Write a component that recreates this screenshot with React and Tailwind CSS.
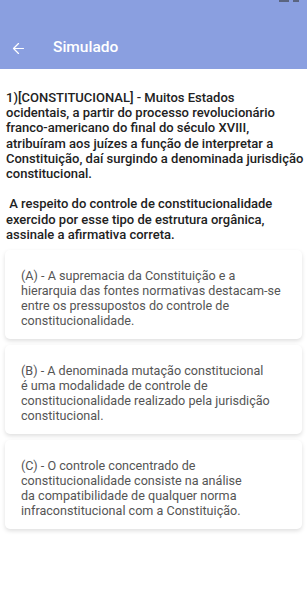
import { ArrowLeft } from "lucide-react";

const question = [
  "1)[CONSTITUCIONAL] - Muitos Estados",
  "ocidentais, a partir do processo revolucionário",
  "franco-americano do final do século XVIII,",
  "atribuíram aos juízes a função de interpretar a",
  "Constituição, daí surgindo a denominada jurisdição",
  "constitucional.",
  "\u00a0",
  "\u00a0A respeito do controle de constitucionalidade",
  "exercido por esse tipo de estrutura orgânica,",
  "assinale a afirmativa correta.",
];

const options = [
  [
    "(A) - A supremacia da Constituição e a",
    "hierarquia das fontes normativas destacam-se",
    "entre os pressupostos do controle de",
    "constitucionalidade.",
  ],
  [
    "(B) - A denominada mutação constitucional",
    "é uma modalidade de controle de",
    "constitucionalidade realizado pela jurisdição",
    "constitucional.",
  ],
  [
    "(C) - O controle concentrado de",
    "constitucionalidade consiste na análise",
    "da compatibilidade de qualquer norma",
    "infraconstitucional com a Constituição.",
  ],
];

function App() {
  return (
    <div className="w-[307px] h-[592px] bg-white overflow-hidden font-['Roboto',sans-serif]">
      <header className="h-[69px] bg-[#8a9fe0] relative flex items-end pb-[12px]">
        <div className="absolute top-0 right-[8px] flex gap-[4px]">
          <div className="w-[10px] h-[2px] bg-[#5a6480]" />
          <div className="w-[6px] h-[2px] bg-[#5a6480]" />
        </div>
        <button className="ml-[10px] text-white">
          <ArrowLeft size={17} strokeWidth={1.75} />
        </button>
        <h1 className="ml-[26px] text-white text-[15.5px] font-medium leading-[20px]">
          Simulado
        </h1>
      </header>

      <div className="px-[6px] pt-[21px]">
        <p className="text-[13px] leading-[15.2px] font-medium text-[#222]">
          {question.map((line, i) => (
            <span key={i} className="block whitespace-nowrap">
              {line}
            </span>
          ))}
        </p>
      </div>

      <div className="px-[5px] pt-[8px] flex flex-col gap-[6px]">
        {options.map((opt) => (
          <div
            key={opt[0]}
            className="bg-white rounded-[5px] shadow-[0_2px_4px_rgba(0,0,0,0.13)] pl-[16px] pr-[14px] pt-[18px] pb-[11px]"
          >
            <p className="text-[12.6px] leading-[15px] text-[#555]">
              {opt.map((line) => (
                <span key={line} className="block whitespace-nowrap">
                  {line}
                </span>
              ))}
            </p>
          </div>
        ))}
      </div>
    </div>
  );
}

export default App;
